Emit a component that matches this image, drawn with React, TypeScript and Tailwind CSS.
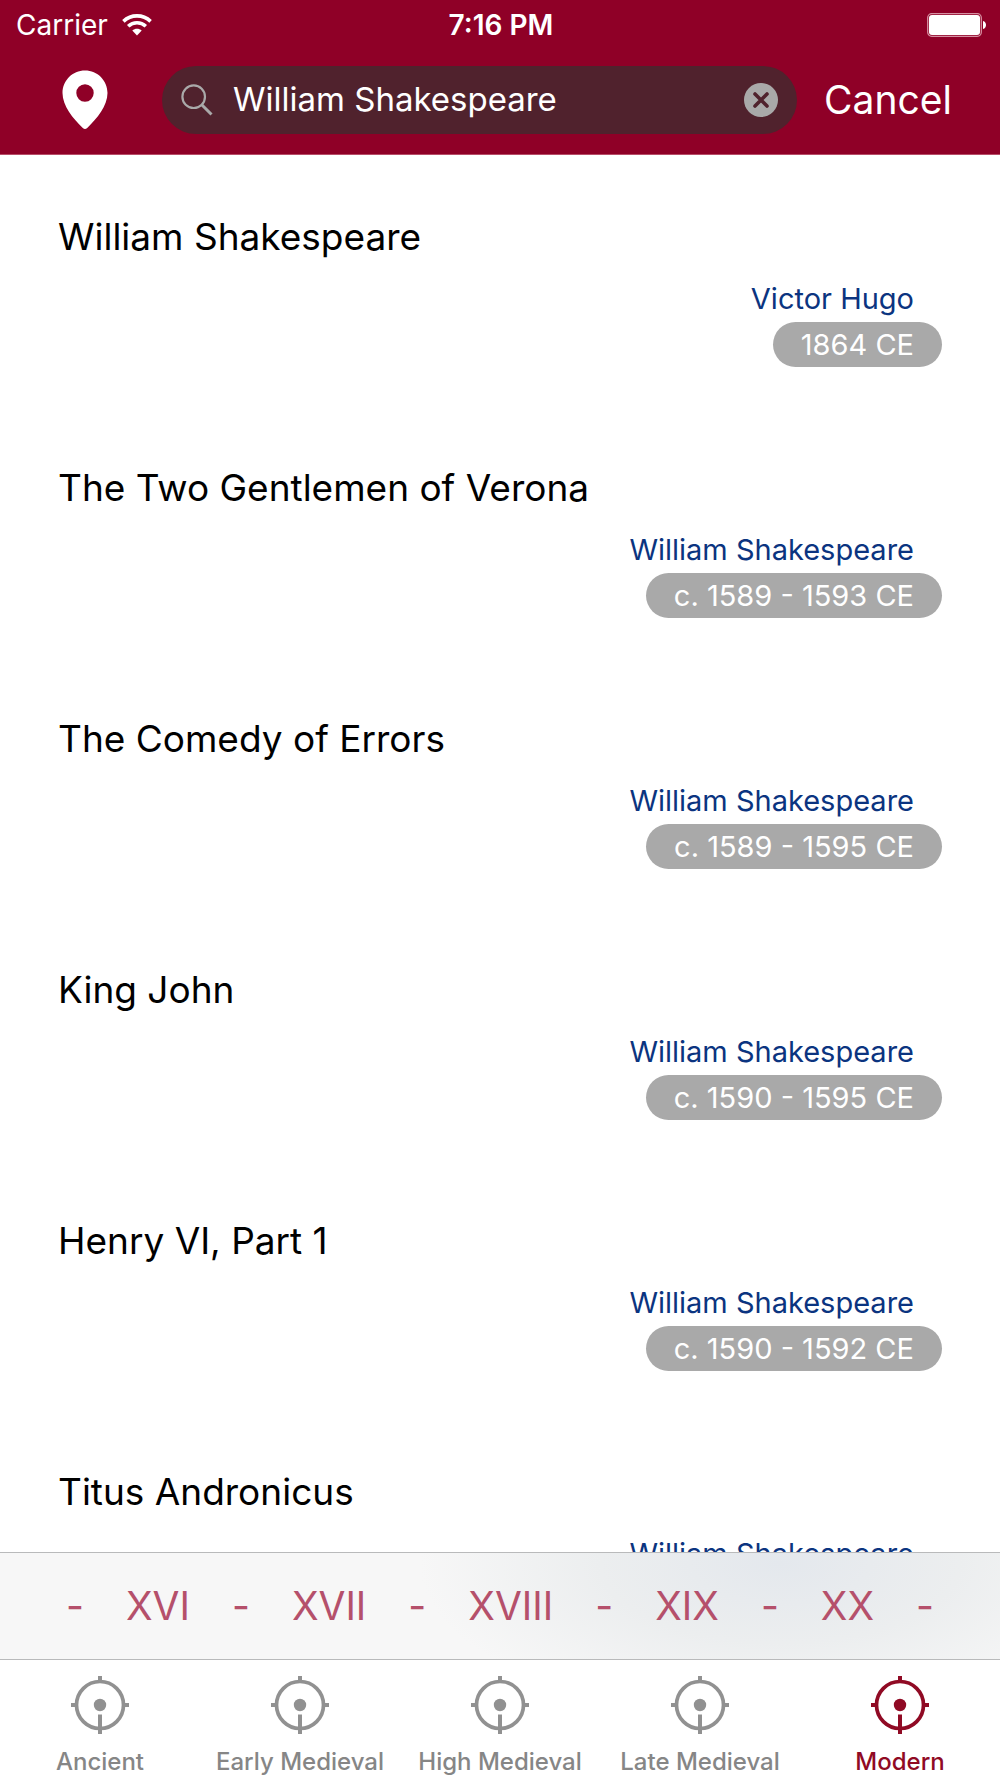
import { useState } from 'react';
import { clsx } from 'clsx';

interface Work {
    title: string;
    author: string;
    date: string;
}

const WORKS: Work[] = [
    { title: 'William Shakespeare', author: 'Victor Hugo', date: '1864 CE' },
    { title: 'The Two Gentlemen of Verona', author: 'William Shakespeare', date: 'c. 1589 - 1593 CE' },
    { title: 'The Comedy of Errors', author: 'William Shakespeare', date: 'c. 1589 - 1595 CE' },
    { title: 'King John', author: 'William Shakespeare', date: 'c. 1590 - 1595 CE' },
    { title: 'Henry VI, Part 1', author: 'William Shakespeare', date: 'c. 1590 - 1592 CE' },
    { title: 'Titus Andronicus', author: 'William Shakespeare', date: '' },
];

const CENTURIES = ['-', 'XVI', '-', 'XVII', '-', 'XVIII', '-', 'XIX', '-', 'XX', '-'];

const ERAS = ['Ancient', 'Early Medieval', 'High Medieval', 'Late Medieval', 'Modern'];

function WifiIcon() {
    return (
        <svg width="30" height="22" viewBox="0 0 30 22" fill="none" stroke="currentColor" strokeWidth="3.6" aria-hidden="true">
            <path d="M1.4 7.4C5.2 3.8 9.9 1.9 15 1.9s9.8 1.9 13.6 5.5" />
            <path d="M6.2 12.3c2.5-2.3 5.5-3.5 8.8-3.5s6.3 1.2 8.8 3.5" />
            <path d="M15 21.5l-4.700-4.900c2.800-2.400 6.600-2.400 9.400 0z" fill="currentColor" stroke="none" />
        </svg>
    );
}

function BatteryIcon() {
    return (
        <svg width="60" height="24" viewBox="0 0 60 24" aria-hidden="true">
            <rect x="1.7" y="0.7" width="53.6" height="22.6" rx="4" fill="none" stroke="#d58fa1" strokeWidth="1.3" />
            <rect x="3" y="2" width="51" height="20" rx="3" fill="#fff" />
            <path d="M57 8c4 1 4 7 0 8z" fill="#fff" />
        </svg>
    );
}

function PinIcon() {
    return (
        <svg width="46" height="60" viewBox="0 0 46 60" aria-hidden="true">
            <path
                d="M23 0.5C10.500 0.5 0.5 10.5 0.5 23c0 13 10.500 25.500 20.300 35a3.200 3.200 0 0 0 4.400 0C35 48.500 45.500 36 45.500 23 45.500 10.500 35.500 0.500 23 0.500zm0 13.800a8.700 8.700 0 1 1 0 17.400 8.700 8.700 0 0 1 0-17.400z"
                fill="currentColor"
                fillRule="evenodd"
            />
        </svg>
    );
}

function SearchIcon() {
    return (
        <svg width="32" height="32" viewBox="0 0 32 32" fill="none" stroke="#a9a9a9" aria-hidden="true">
            <circle cx="12.7" cy="12.7" r="11.3" strokeWidth="2.2" />
            <path d="M20.500 20.500l10 10" strokeWidth="3" />
        </svg>
    );
}

function ClearIcon() {
    return (
        <svg width="34" height="34" viewBox="0 0 34 34" aria-hidden="true">
            <circle cx="17" cy="17" r="17" fill="#a9a9a9" />
            <path d="M11 11l12 12M23 11L11 23" stroke="#50222d" strokeWidth="3.6" strokeLinecap="round" />
        </svg>
    );
}

function TargetIcon({ className }: { className: string }) {
    return (
        <svg width="58" height="58" viewBox="0 0 58 58" fill="none" stroke="currentColor" strokeWidth="4" className={className} aria-hidden="true">
            <circle cx="29" cy="29" r="23.5" strokeWidth="3.7" />
            <circle cx="29" cy="29" r="6.2" fill="currentColor" stroke="none" />
            <path d="M29 0v6M0 29h6M52 29h6M29 38.5V58" />
        </svg>
    );
}

export default function App() {
    const [query, setQuery] = useState('William Shakespeare');
    const [era, setEra] = useState('Modern');

    return (
        <div className="flex h-screen flex-col bg-white font-['Inter',sans-serif] text-black">
            {/* Status bar + search */}
            <header className="shrink-0 border-b border-[#b84d68] bg-[#8f0027] text-white">
                <div className="grid h-[50px] grid-cols-[1fr_auto_1fr] items-center pr-3.5 pl-4 text-[28px]">
                    <div className="flex items-center gap-3.5">
                        <span>Carrier</span>
                        <WifiIcon />
                    </div>
                    <time className="font-semibold">7:16 PM</time>
                    <div className="flex justify-end">
                        <BatteryIcon />
                    </div>
                </div>

                <div className="flex h-[104px] items-center pr-12 pb-1 pl-[62px]">
                    <button aria-label="Places" className="mr-[54px]">
                        <PinIcon />
                    </button>
                    <div className="flex h-[68px] min-w-0 flex-1 items-center rounded-full bg-[#50222d] px-[19px]">
                        <SearchIcon />
                        <input
                            type="text"
                            aria-label="Search"
                            value={query}
                            onChange={e => setQuery(e.target.value)}
                            className="ml-5 min-w-0 flex-1 bg-transparent text-[33px] outline-none"
                        />
                        <button aria-label="Clear search" onClick={() => setQuery('')}>
                            <ClearIcon />
                        </button>
                    </div>
                    <button className="ml-[27px] text-[39px]">Cancel</button>
                </div>
            </header>

            {/* Results */}
            <ul className="min-h-0 flex-1 overflow-y-auto [scrollbar-width:none]">
                {WORKS.map(work => (
                    <li key={work.title} className="h-[251px] px-[58px] pt-[58px]">
                        <h2 className="text-[37px] leading-[48px]">{work.title}</h2>
                        <div className="mt-4 flex flex-col items-end gap-0.5">
                            <a href="#author" className="pr-7 text-[29px] leading-[43px] text-[#0b3480]">
                                {work.author}
                            </a>
                            {work.date && (
                                <span className="rounded-full bg-[#a9a9a9] px-7 pt-px text-[29px] leading-[44px] text-white">
                                    {work.date}
                                </span>
                            )}
                        </div>
                    </li>
                ))}
            </ul>

            {/* Century picker */}
            <div className="flex h-[108px] shrink-0 items-center justify-center gap-[42px] border-y border-[#b9babb] bg-[#f7f7f7] bg-[radial-gradient(ellipse_36%_150%_at_78%_10%,#e4e8ed_0%,#eceeef_50%,#f7f7f7_100%)] text-[39px] text-[#b5506b]">
                {CENTURIES.map((label, i) => (
                    <button key={i}>{label}</button>
                ))}
            </div>

            {/* Tabs */}
            <nav className="grid h-[118px] shrink-0 grid-cols-5">
                {ERAS.map(name => (
                    <button
                        key={name}
                        onClick={() => setEra(name)}
                        className={clsx(
                            'flex flex-col items-center gap-3 pt-4 text-2xl leading-8 font-medium whitespace-nowrap',
                            era === name ? 'text-[#900a24]' : 'text-[#868686]'
                        )}
                    >
                        <TargetIcon className={era === name ? 'text-[#900a24]' : 'text-[#919191]'} />
                        {name}
                    </button>
                ))}
            </nav>
        </div>
    );
}
